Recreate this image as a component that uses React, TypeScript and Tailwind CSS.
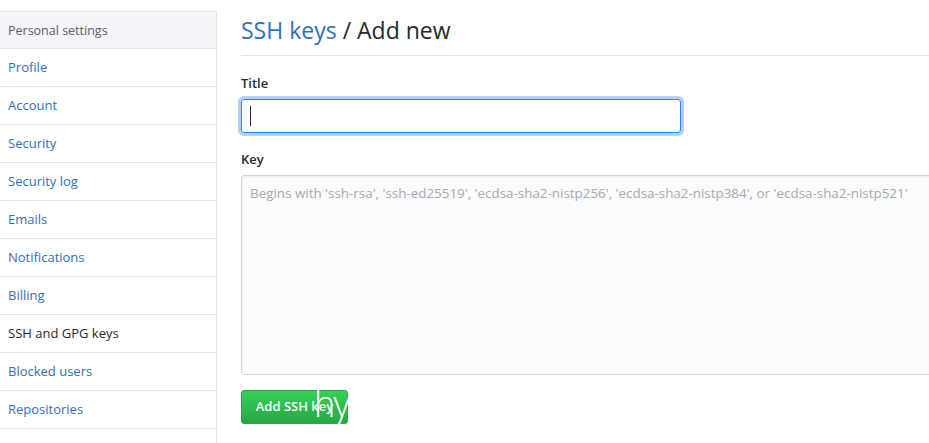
const items = [
  'Profile',
  'Account',
  'Security',
  'Security log',
  'Emails',
  'Notifications',
  'Billing',
  'SSH and GPG keys',
  'Blocked users',
  'Repositories',
]

export default function App() {
  return (
    <div
      className="w-[929px] h-[443px] overflow-hidden bg-white flex"
      style={{ fontFamily: '"Open Sans", "Noto Sans", sans-serif' }}
    >
      <nav className="w-[217px] shrink-0 mt-[11px] border-t border-r border-[#e1e4e8] self-start">
        <div className="h-[37px] bg-[#f3f5f8] border-b border-[#e1e4e8] flex items-center pl-2 pt-[2px] text-[12.5px] text-[#586069]">
          Personal settings
        </div>
        {items.map((item) => (
          <div
            key={item}
            className={`h-[38px] border-b border-[#e1e4e8] flex items-center pl-2 pt-[1px] text-[13px] ${
              item === 'SSH and GPG keys' ? 'text-[#24292e]' : 'text-[#2f6fbe]'
            }`}
          >
            {item}
          </div>
        ))}
        <div className="h-[38px]" />
      </nav>

      <main className="ml-6 w-[760px] shrink-0">
        <div className="h-[56px] border-b border-[#e1e4e8] flex items-center pt-[6px] text-[23px] text-[#24292e]">
          <span className="text-[#2f6fbe]">SSH keys</span>
          <span className="ml-[6px]">/ Add new</span>
        </div>

        <div className="mt-[17px] text-[13px] font-semibold text-[#24292e] leading-5">Title</div>
        <div className="mt-[6px] w-[440px] h-[34px] rounded-[3px] border border-[#2188ff] shadow-[0_0_0_3px_rgba(3,102,214,0.3)] flex items-center pl-[8px]">
          <span className="w-px h-[20px] bg-[#24292e]" />
        </div>

        <div className="mt-[16px] text-[13px] font-semibold text-[#24292e] leading-5">Key</div>
        <div className="mt-[6px] h-[200px] rounded-[3px] border border-[#d1d5da] bg-[#fafbfc] shadow-[inset_0_1px_2px_rgba(27,31,35,0.075)] px-[8px] pt-[7px] text-[13.4px] text-[#a3aab1]">
          Begins with 'ssh-rsa', 'ssh-ed25519', 'ecdsa-sha2-nistp256', 'ecdsa-sha2-nistp384', or 'ecdsa-sha2-nistp521'
        </div>

        <div className="mt-[15px] relative w-[107px] h-[34px]">
          <button className="w-full h-full rounded-[3px] border border-[#28a745] bg-gradient-to-b from-[#34d058] to-[#28a745] text-white text-[13px] font-semibold">
            Add SSH key
          </button>
          <span className="absolute left-[73px] -top-[4px] text-[36px] leading-none font-light text-white tracking-tighter">
            hyt
          </span>
        </div>
      </main>
    </div>
  )
}
